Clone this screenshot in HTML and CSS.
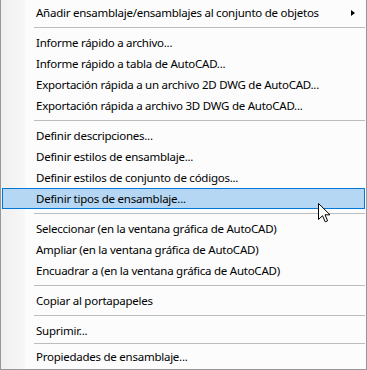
FILE: index.html
```html
<!DOCTYPE html>
<html lang="es">
<head>
<meta charset="utf-8">
<title>Menú contextual</title>
<link rel="stylesheet" href="styles.css">
</head>
<body>
<div class="menu">
  <div class="item has-sub"><span class="label">Añadir ensamblaje/ensamblajes al conjunto de objetos</span><span class="arrow"></span></div>
  <div class="sep"></div>
  <div class="item"><span class="label">Informe rápido a archivo...</span></div>
  <div class="item"><span class="label">Informe rápido a tabla de AutoCAD...</span></div>
  <div class="item"><span class="label">Exportación rápida a un archivo 2D DWG de AutoCAD...</span></div>
  <div class="item"><span class="label">Exportación rápida a archivo 3D DWG de AutoCAD...</span></div>
  <div class="sep"></div>
  <div class="item"><span class="label">Definir descripciones...</span></div>
  <div class="item"><span class="label">Definir estilos de ensamblaje...</span></div>
  <div class="item"><span class="label">Definir estilos de conjunto de códigos...</span></div>
  <div class="item hover"><span class="label">Definir tipos de ensamblaje...</span>
    <svg class="cursor" width="13" height="20" viewBox="0 0 13 20"><path d="M0.5 0.5 L0.5 16.5 L4.5 12.7 L7.2 18.8 L9.6 17.8 L7 11.8 L12 11.8 Z" fill="#ffffff" stroke="#000000" stroke-width="1" stroke-linejoin="miter"/></svg>
  </div>
  <div class="sep"></div>
  <div class="item"><span class="label">Seleccionar (en la ventana gráfica de AutoCAD)</span></div>
  <div class="item"><span class="label">Ampliar (en la ventana gráfica de AutoCAD)</span></div>
  <div class="item"><span class="label">Encuadrar a (en la ventana gráfica de AutoCAD)</span></div>
  <div class="sep"></div>
  <div class="item"><span class="label">Copiar al portapapeles</span></div>
  <div class="sep"></div>
  <div class="item"><span class="label">Suprimir...</span></div>
  <div class="sep sep-tight"></div>
  <div class="item"><span class="label">Propiedades de ensamblaje...</span></div>
</div>
</body>
</html>
```
FILE: styles.css
```css
html, body {
  margin: 0;
  padding: 0;
  background: #ffffff;
}
.menu {
  box-sizing: border-box;
  width: 367px;
  height: 370px;
  border-left: 1px solid #979797;
  border-right: 1px solid #979797;
  border-bottom: 1px solid #979797;
  padding-top: 2px;
  display: flex;
  flex-direction: column;
  background:
    linear-gradient(to right, #f0f0f0 0, #f7f7f7 24px, #fcfcfc 24px, #fcfcfc 100%);
  font-family: "Segoe UI", "Noto Sans", "DejaVu Sans", sans-serif;
  font-size: 11.5px;
  letter-spacing: -0.25px;
  color: #000000;
  overflow: hidden;
}
.item {
  position: relative;
  height: 21px;
  flex: 0 0 21px;
  margin: 0 1px;
  padding-left: 34px;
  padding-right: 10px;
  display: flex;
  align-items: center;
  justify-content: space-between;
  box-sizing: border-box;
  line-height: 21px;
  white-space: nowrap;
}
.item.hover {
  background: #b5d7f3;
  outline: 1px solid #0078d7;
  outline-offset: -1px;
}
.arrow {
  width: 0;
  height: 0;
  border-left: 4px solid #000000;
  border-top: 3.5px solid transparent;
  border-bottom: 3.5px solid transparent;
}
.sep {
  flex: 0 0 1px;
  height: 1px;
  margin: 4px 1px 4px 33px;
  background: #bdbdbd;
}
.sep-tight {
  margin-top: 2px;
  margin-bottom: 2px;
}
.cursor {
  position: absolute;
  left: 316px;
  top: 15px;
}
```
